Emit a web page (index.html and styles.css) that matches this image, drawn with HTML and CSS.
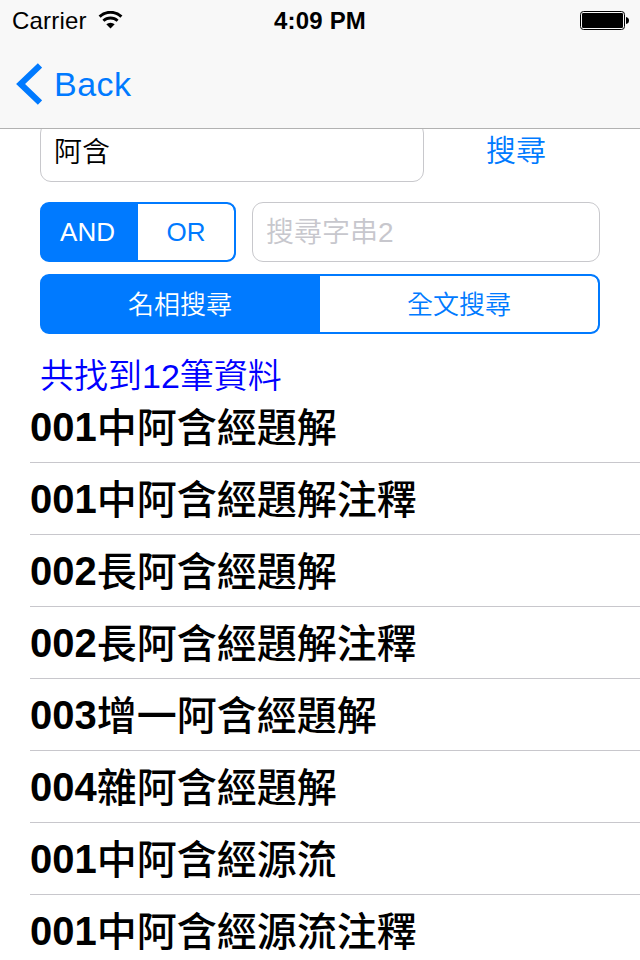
FILE: index.html
```html
<!DOCTYPE html>
<html lang="zh-Hant">
<head>
  <meta charset="UTF-8">
  <meta name="viewport" content="width=device-width, initial-scale=1.0">
  <title>搜尋</title>
  <link rel="stylesheet" href="styles.css">
</head>
<body>
  <header>
    <div class="status">
      <div class="carrier">
        <span>Carrier</span>
        <svg class="wifi" width="26" height="18" viewBox="0 0 26 18">
          <path d="M1.6 5.6 A16 16 0 0 1 23.4 5.6" fill="none" stroke="#000" stroke-width="3"/>
          <path d="M5.4 9.8 A10.4 10.4 0 0 1 19.6 9.8" fill="none" stroke="#000" stroke-width="2.9"/>
          <path d="M8.3 13.2 A6.4 6.4 0 0 1 16.7 13.2 L12.5 17.6 Z"/>
        </svg>
      </div>
      <div class="time">4:09 PM</div>
      <svg class="battery" width="50" height="20" viewBox="0 0 50 20">
        <rect x="0.5" y="0.5" width="44" height="18" rx="3" fill="none" stroke="#000"/>
        <rect x="2" y="2" width="41" height="15" rx="1.2"/>
        <path d="M46 6 Q49 6.5 49 9.5 Q49 12.5 46 13 Z"/>
      </svg>
    </div>
    <nav>
      <a href="#" class="back">
        <svg width="26" height="42" viewBox="0 0 26 42">
          <path d="M24 2.4 L4.6 21 L24 39.6" fill="none" stroke="#007aff" stroke-width="6.2"/>
        </svg>
        <span>Back</span>
      </a>
    </nav>
  </header>

  <main>
    <form>
      <div class="row">
        <div class="field first">阿含</div>
        <a href="#" class="search">搜尋</a>
      </div>
      <div class="row">
        <div class="segment small">
          <span class="active">AND</span>
          <span>OR</span>
        </div>
        <div class="field second">搜尋字串2</div>
      </div>
      <div class="segment">
        <span class="active">名相搜尋</span>
        <span>全文搜尋</span>
      </div>
      <p class="found">共找到12筆資料</p>
    </form>

    <ul class="results">
      <li><b>001</b>中阿含經題解</li>
      <li><b>001</b>中阿含經題解注釋</li>
      <li><b>002</b>長阿含經題解</li>
      <li><b>002</b>長阿含經題解注釋</li>
      <li><b>003</b>增一阿含經題解</li>
      <li><b>004</b>雜阿含經題解</li>
      <li><b>001</b>中阿含經源流</li>
      <li><b>001</b>中阿含經源流注釋</li>
    </ul>
  </main>
</body>
</html>
```
FILE: styles.css
```css
* {
  box-sizing: border-box;
}

body {
  margin: 0;
  height: 960px;
  overflow: hidden;
  display: flex;
  flex-direction: column;
  font-family: "Liberation Sans", "Noto Sans CJK TC", sans-serif;
  background-color: #fff;
  color: #000;
}

a {
  color: #007aff;
  text-decoration: none;
}

header {
  flex: none;
  height: 129px;
  background-color: #f8f8f8;
  border-bottom: 1px solid #b2b2b2;
}

.status {
  display: grid;
  grid-template-columns: 1fr auto 1fr;
  height: 40px;
  padding: 0 10px 0 12px;
  font-size: 24px;
  line-height: 42px;
}

.carrier {
  display: flex;
  align-items: flex-start;
  gap: 11px;
  letter-spacing: 0.2px;
}

.wifi {
  margin-top: 11px;
}

.time {
  margin-left: -2px;
  font-weight: bold;
  letter-spacing: 0.2px;
}

.battery {
  justify-self: end;
  margin-top: 11px;
}

.back {
  display: flex;
  align-items: center;
  gap: 12px;
  height: 88px;
  padding-left: 16px;
  font-size: 34px;
  letter-spacing: 0.5px;
}

main {
  flex: 1;
  overflow: hidden;
}

/* first row is scrolled a little under the bar */
form {
  margin-top: -7px;
  padding: 0 40px;
}

.row {
  display: flex;
  gap: 16px;
}

.row + .row {
  margin: 20px 0 12px;
}

.field {
  height: 60px;
  padding: 0 13px;
  border: 1px solid #c8c8cc;
  border-radius: 11px;
  font-size: 28px;
  font-weight: 350;
  line-height: 59px;
}

.first {
  width: 384px;
}

.second {
  flex: 1;
  color: #c7c7cd;
}

.search {
  flex: 1;
  padding-right: 8px;
  font-size: 30px;
  font-weight: 350;
  line-height: 58px;
  text-align: center;
}

.segment {
  display: flex;
  height: 60px;
  border: 2px solid #007aff;
  border-radius: 9px;
  background-color: #007aff;
  overflow: hidden;
  font-size: 26px;
  font-weight: 350;
  line-height: 58px;
  text-align: center;
  color: #007aff;
}

.segment span {
  width: 50%;
  background-color: #fff;
  border-radius: 0 7px 7px 0;
}

.segment .active {
  padding-right: 2px;
  border-radius: 0;
  background-color: #007aff;
  color: #fff;
}

.small {
  width: 196px;
  line-height: 56px;
}

.small .active {
  padding-right: 5px;
}

.found {
  margin: 18px 0 0;
  height: 39px;
  font-size: 34px;
  font-weight: 350;
  line-height: 49px;
  color: #0000ff;
}

.results {
  list-style-type: none;
  margin: 0;
  padding: 0 0 0 30px;
}

.results li {
  height: 72px;
  border-bottom: 1px solid #c8c7cc;
  font-size: 40px;
  font-weight: 500;
  line-height: 74px;
  white-space: nowrap;
}

.results b {
  line-height: 1;
  vertical-align: 1px;
}
```
